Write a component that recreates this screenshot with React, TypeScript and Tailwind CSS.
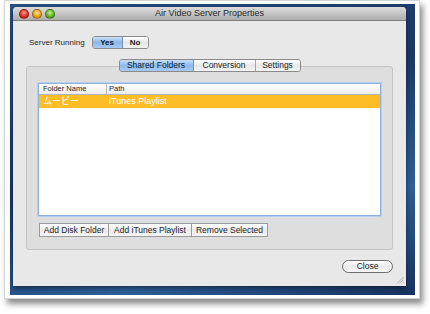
import React from 'react';

const font = { fontFamily: '"Liberation Sans", Arial, sans-serif' };

const Light = ({ color }: { color: string }) => (
  <span className={`block w-[10px] h-[10px] rounded-full border border-black/30 ${color}`} />
);

const App: React.FC = () => {
  return (
    <div className="w-[430px] h-[314px] bg-white pl-[4px]" style={font}>
      {/* photo frame */}
      <div className="w-[416px] h-[299px] bg-white border border-[#d4d4d4] pl-[5px] pr-[4px] pt-[3px] pb-[3px] shadow-[3px_5px_6px_rgba(0,0,0,0.45)]">
        {/* desktop */}
        <div className="w-full h-full bg-[linear-gradient(160deg,#2a4f82_0%,#1b3868_45%,#2d5f98_75%,#173260_100%)] pl-[3px] pt-[3px]">
          {/* window */}
          <div className="relative w-[393px] h-[279px] flex flex-col rounded-t-[4px] bg-[#e8e8e8] shadow-[0_2px_5px_rgba(0,0,0,0.5)]">
            <div className="relative h-[14px] flex items-center justify-center rounded-t-[4px] bg-[linear-gradient(#dcdcdc,#aeaeae)] border-b border-[#7d7d7d]">
              <div className="absolute left-[6px] top-[2px] flex gap-[3px]">
                <Light color="bg-[radial-gradient(circle_at_50%_35%,#ff9a8f,#d8281c_60%,#a5130b)]" />
                <Light color="bg-[radial-gradient(circle_at_50%_35%,#ffe09a,#e59a12_60%,#b7700a)]" />
                <Light color="bg-[radial-gradient(circle_at_50%_35%,#c8f39a,#5cae1f_60%,#3b7d10)]" />
              </div>
              <span className="text-[9px] text-[#2a2a2a] leading-none">Air Video Server Properties</span>
            </div>

            <div className="flex-1 flex flex-col px-[13px] pt-[15px]">
              <div className="flex items-center pl-[3px] h-[13px]">
                <span className="text-[8px] text-[#1e1e1e]">Server Running</span>
                <div className="ml-[7px] flex h-[13px] w-[57px] rounded-[3px] border border-[#8c8c8c] overflow-hidden text-[8px] leading-none">
                  <span className="w-[30px] flex items-center justify-center bg-[linear-gradient(#c9def7,#8db8ec_50%,#a9cbf3)] border-r border-[#7a8fae] text-[#0d1c36] font-bold">Yes</span>
                  <span className="flex-1 flex items-center justify-center bg-[linear-gradient(#ffffff,#e6e6e6_50%,#f2f2f2)] text-[#1e1e1e] font-bold">No</span>
                </div>
              </div>

              <div className="mt-[10px] flex flex-col">
                <div className="relative z-10 flex justify-center">
                  <div className="flex h-[13px] rounded-[3px] border border-[#8a8a8a] overflow-hidden text-[8.5px] leading-none">
                    <span className="w-[74px] flex items-center justify-center bg-[linear-gradient(#c9def7,#8db8ec_50%,#a9cbf3)] text-[#0d1c36] border-r border-[#7a8fae]">Shared Folders</span>
                    <span className="w-[62px] flex items-center justify-center bg-[linear-gradient(#ffffff,#e8e8e8_50%,#f3f3f3)] text-[#1e1e1e] border-r border-[#a5a5a5]">Conversion</span>
                    <span className="w-[44px] flex items-center justify-center bg-[linear-gradient(#ffffff,#e8e8e8_50%,#f3f3f3)] text-[#1e1e1e]">Settings</span>
                  </div>
                </div>
                <div className="-mt-[6px] h-[184px] rounded-[3px] border border-[#c4c4c4] bg-[#dedede] px-[11px] pt-[16px] flex flex-col">
                  <div className="h-[133px] bg-white border border-[#8eb1dc] shadow-[0_0_0_1px_#b8d0ee] flex flex-col">
                    <div className="flex h-[11px] text-[7.5px] leading-none text-[#1e1e1e] bg-[linear-gradient(#ffffff,#ececec)] border-b border-[#b5b5b5]">
                      <span className="w-[68px] flex items-center pl-[4px] border-r border-[#b5b5b5]">Folder Name</span>
                      <span className="flex items-center pl-[2px]">Path</span>
                    </div>
                    <div className="flex h-[13px] items-center bg-[#fdbd27] text-white text-[9px] leading-none">
                      <span className="w-[68px] pl-[4px]" style={{ fontFamily: '"Liberation Sans", "Noto Sans CJK JP", sans-serif' }}>ムービー</span>
                      <span className="pl-[2px]">iTunes Playlist</span>
                    </div>
                  </div>
                  <div className="mt-[7px] ml-[1px] flex h-[14px] text-[8.5px] leading-none text-[#1e1e1e]">
                    <span className="w-[70px] flex items-center justify-center border border-[#9a9a9a] bg-[linear-gradient(#ffffff,#ebebeb_50%,#f5f5f5)]">Add Disk Folder</span>
                    <span className="w-[84px] -ml-px flex items-center justify-center border border-[#9a9a9a] bg-[linear-gradient(#ffffff,#ebebeb_50%,#f5f5f5)]">Add iTunes Playlist</span>
                    <span className="w-[77px] -ml-px flex items-center justify-center border border-[#9a9a9a] bg-[linear-gradient(#ffffff,#ebebeb_50%,#f5f5f5)]">Remove Selected</span>
                  </div>
                </div>
              </div>

              <div className="mt-[10px] flex justify-end pr-[-1px]">
                <span className="w-[51px] h-[13px] rounded-full border border-[#6e6e6e] bg-[linear-gradient(#ffffff,#e9e9e9_50%,#f6f6f6)] flex items-center justify-center text-[8.5px] leading-none text-[#1e1e1e]">Close</span>
              </div>
            </div>

            <svg className="absolute right-[2px] bottom-[2px]" width="8" height="8" viewBox="0 0 8 8">
              <path d="M1 7.5 L7.5 1 M3.5 7.5 L7.5 3.5 M6 7.5 L7.5 6" stroke="#a0a0a0" strokeWidth="0.8" />
            </svg>
          </div>
        </div>
      </div>
    </div>
  );
};

export default App;
